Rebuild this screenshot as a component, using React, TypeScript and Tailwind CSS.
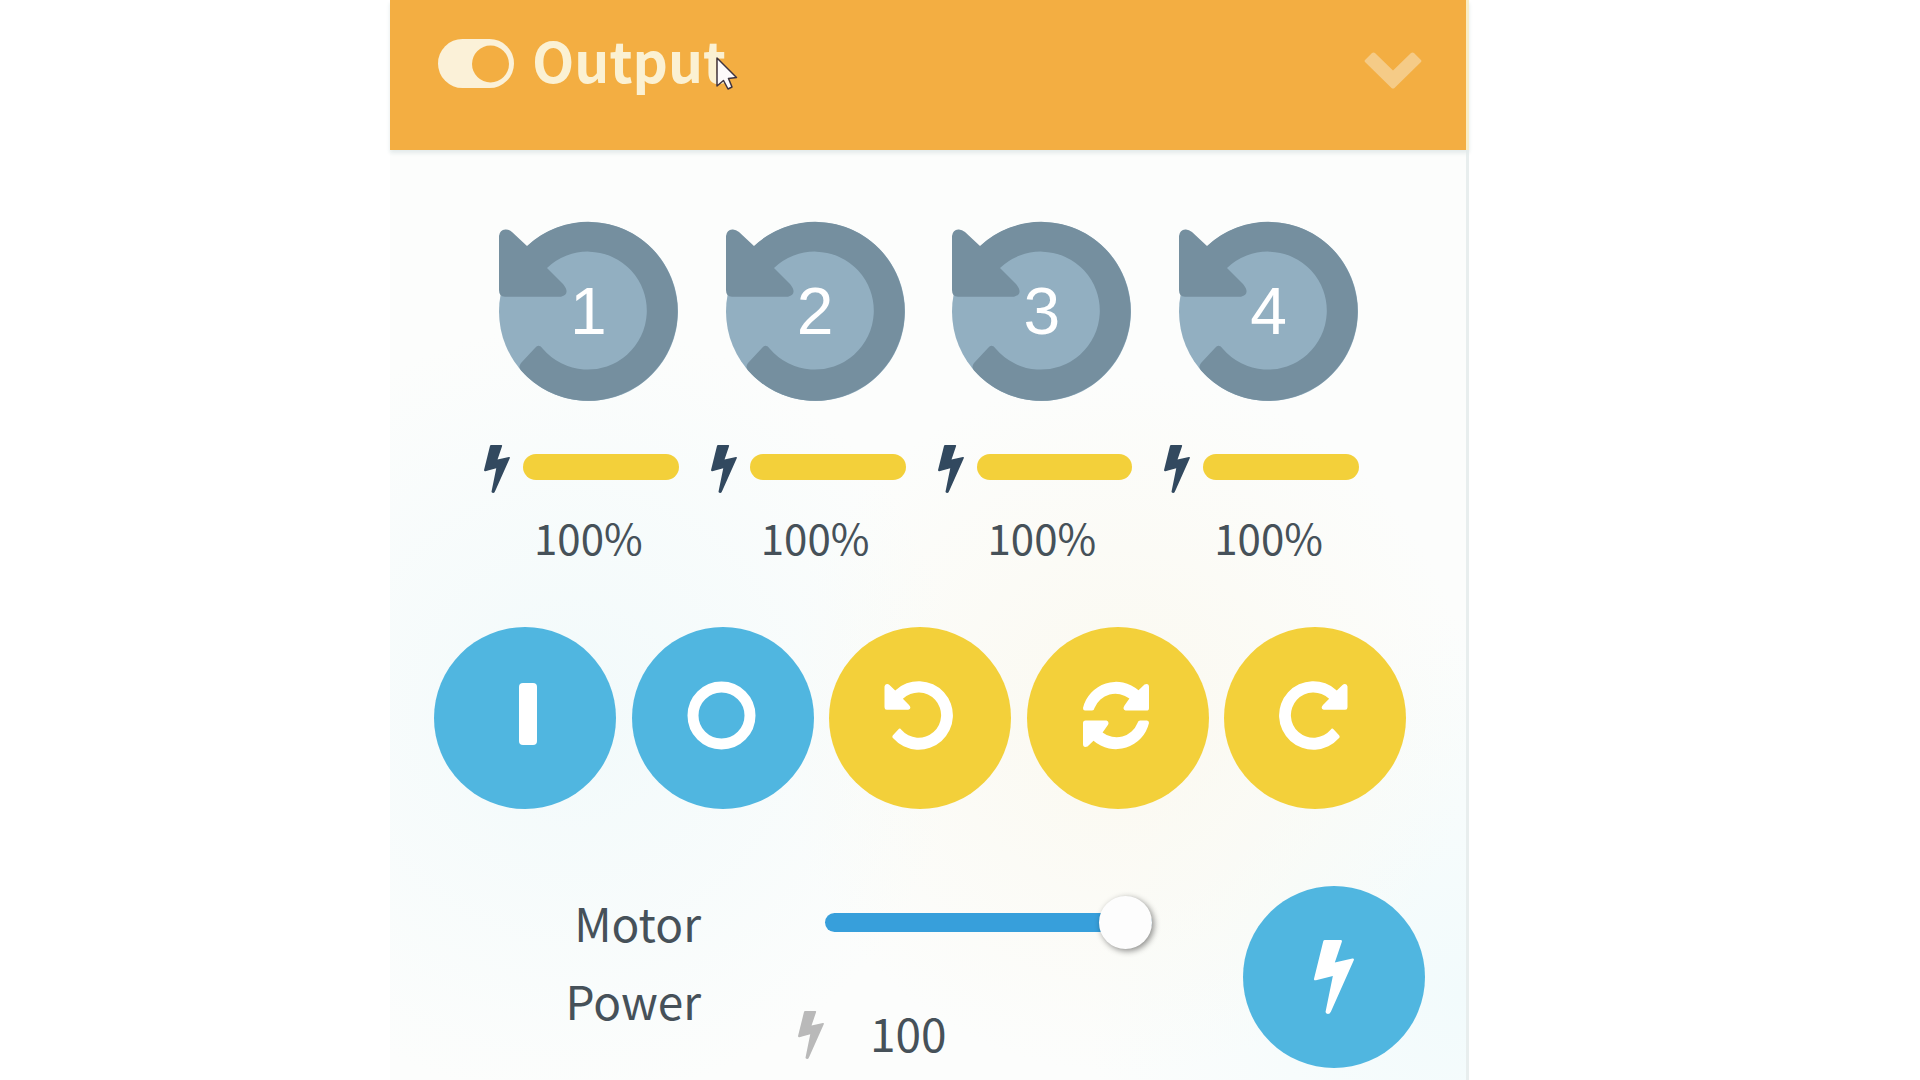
import { useState } from "react";

const ARROW =
  "M28 24A89.5 89.5 0 1 1 22 148.5Q19 145 22 141L36 126Q40 121 44 127A59 59 0 1 0 48 46L64 62Q72 72 62 74.7H6Q0 74.7 0 68V14Q1 7 7 7.5Q10 7.5 13 10Z";
const HALF_ARROW =
  "M58 83.6Q56 83.6 56 81A34 34 0 0 1 111.5 63.3L117.5 57.5Q122 56 122 60V81Q122 83.6 119.5 83.6H98.5Q95 82 97.5 78.5L102.4 71.6A22.5 22.5 0 0 0 67.5 81Q67 83.6 65 83.6Z";

function Bolt({ className }: { className: string }) {
  return (
    <svg viewBox="0 0 121 224" className={className} fill="currentColor" aria-hidden="true">
      <path d="M28 4Q29 0 33 0H81Q86 0 84 6L63 68L116 56Q123 55 120 62L51 217Q48 224 42 224Q34 223 35 217L57 109L6 122Q-1 123 0 117Z" />
    </svg>
  );
}

function Motor({ id, power }: { id: number; power: number }) {
  return (
    <div className="flex flex-col items-center">
      <button
        aria-label={`Motor ${id}`}
        className="grid size-[179px] place-items-center rounded-full bg-[#92afc1]"
      >
        <svg viewBox="0 0 179 179" className="col-start-1 row-start-1 size-full overflow-visible" aria-hidden="true">
          <path d={ARROW} fill="#758f9f" />
        </svg>
        <span className="col-start-1 row-start-1 pb-0.5 font-['Liberation_Sans',sans-serif] text-[66px] leading-none text-white">
          {id}
        </span>
      </button>
      <div className="mt-11 flex w-full items-start gap-[13px] pr-[23px] pl-[9px]">
        <Bolt className="h-12 w-[26px] shrink-0 text-[#32495f]" />
        <div className="mt-[9px] h-[26px] flex-1 rounded-full bg-[#f3d03a]" />
      </div>
      <span className="mt-3.5 text-[42px] leading-[60px]">{power}%</span>
    </div>
  );
}

function RoundButton({ label, color, children }: { label: string; color: string; children: React.ReactNode }) {
  return (
    <button aria-label={label} className={`grid size-[182px] shrink-0 place-items-center rounded-full text-white ${color}`}>
      {children}
    </button>
  );
}

function Glyph({ children }: { children: React.ReactNode }) {
  return (
    <svg viewBox="0 0 182 182" className="size-full" fill="currentColor" aria-hidden="true">
      {children}
    </svg>
  );
}

const BLUE = "bg-[#50b6e0]";
const YELLOW = "bg-[#f3d03a]";

export default function App() {
  const [power, setPower] = useState(100);
  return (
    <div className="h-screen overflow-hidden bg-white pr-[451px] pl-[390px] font-['Noto_Sans_CJK_SC',sans-serif] text-[#465159]">
      <section className="min-h-full border-r-[3px] border-[#e8eeee] bg-[#fcfdfc] bg-[radial-gradient(circle_at_17%_66%,#f2fafbff,#f2fafb00_34%),radial-gradient(circle_at_68%_67%,#fbf9f0ff,#fbf9f000_34%),radial-gradient(circle_at_100%_92%,#f2fbfcff,#f2fbfc00_26%)]">
        <header className="-mr-[3px] flex h-[150px] items-center border-r-[3px] border-[#f9edc4] bg-[#f3ae42] pr-11 pb-6 pl-12 shadow-[0_3px_4px_#e3eaea]">
          <svg viewBox="0 0 76 49" className="w-[76px] shrink-0" aria-hidden="true">
            <rect width="76" height="49" rx="24.5" fill="#fbf1d8" />
            <circle cx="52.500" cy="25" r="18.5" fill="#f3ae42" />
          </svg>
          <h1 className="ml-[18px] pb-2 text-[55px] leading-none font-bold text-[#fbf1d3]">Output</h1>
          <button aria-label="Collapse Output" className="mt-3.5 ml-auto">
            <svg viewBox="0 0 58 37" className="w-[58px]" aria-hidden="true">
              <path d="M1 8L8 1Q9.500 0 11 1L29 18.500L47 1Q48.500 0 50 1L57 8Q58 9 57 10L30.500 36Q29 37 27.500 36L1 10Q0 9 1 8Z" fill="#f5cb87" />
            </svg>
          </button>
        </header>

        <div className="grid grid-cols-4 pr-[84px] pl-[85px] pt-[72px]">
          {[1, 2, 3, 4].map((id) => (
            <Motor key={id} id={id} power={100} />
          ))}
        </div>

        <div className="mt-[60px] flex justify-between pr-[60px] pl-11">
          <RoundButton label="On" color={BLUE}>
            <Glyph><rect x="85" y="56" width="18" height="62" rx="4" /></Glyph>
          </RoundButton>
          <RoundButton label="Off" color={BLUE}>
            <Glyph><circle cx="89.500" cy="88.500" r="28.500" fill="none" stroke="currentColor" strokeWidth="11" /></Glyph>
          </RoundButton>
          <RoundButton label="Counterclockwise" color={YELLOW}>
            <Glyph><path transform="translate(55.500 54.200) scale(.383)" d={ARROW} /></Glyph>
          </RoundButton>
          <RoundButton label="Reverse" color={YELLOW}>
            <Glyph>
              <path d={HALF_ARROW} />
              <path transform="rotate(180 89 88.500)" d={HALF_ARROW} />
            </Glyph>
          </RoundButton>
          <RoundButton label="Clockwise" color={YELLOW}>
            <Glyph><path transform="translate(123.500 54.200) scale(-.383 .383)" d={ARROW} /></Glyph>
          </RoundButton>
        </div>

        <div className="mt-[74px] flex items-start pr-[41px] text-[46px] leading-[78px]">
          <label htmlFor="power" className="w-[311px] shrink-0 pl-[150px] text-right">
            Motor Power
          </label>
          <div className="ml-[97px] flex flex-1 flex-col gap-8">
            <div className="flex h-[78px] items-center pr-[91px] pl-[27px]">
              <input
                id="power"
                type="range"
                min={0}
                max={100}
                value={power}
                onChange={(e) => setPower(Number(e.target.value))}
                className="h-[19px] w-full appearance-none rounded-full bg-[#379fdb] [&::-webkit-slider-thumb]:size-[53px] [&::-webkit-slider-thumb]:appearance-none [&::-webkit-slider-thumb]:rounded-full [&::-webkit-slider-thumb]:bg-[#fdfdfd] [&::-webkit-slider-thumb]:shadow-[2px_2px_6px_#00000073]"
              />
            </div>
            <div className="flex items-center gap-[46px]">
              <Bolt className="mt-1.5 h-12 w-[26px] text-[#b9b9b9]" />
              <output htmlFor="power">{power}</output>
            </div>
          </div>
          <div className="mt-[3px]">
            <RoundButton label="Set power" color={BLUE}>
              <Bolt className="h-[74px] w-10" />
            </RoundButton>
          </div>
        </div>
      </section>

      <svg viewBox="0 0 22 34" className="pointer-events-none absolute top-[57px] left-[716px] w-[22px]" aria-hidden="true">
        <path d="M1 1V29L7.500 23.500L12 32L16 30L12.500 21.500L20.500 20.500Z" fill="#fdfafa" stroke="#3f3440" strokeWidth="1.500" strokeLinejoin="round" />
      </svg>
    </div>
  );
}
